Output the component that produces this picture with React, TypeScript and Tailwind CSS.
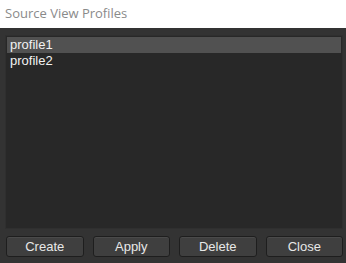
import React from "react";

export default function App() {
  const btn =
    "w-[78px] h-[21px] rounded-[3px] border border-[#1e1e1e] bg-[#3f3f3f] text-[13px] leading-none text-[#e8e8e8] flex items-center justify-center shadow-[inset_0_1px_0_#4a4a4a]";
  return (
    <div className="w-[346px] h-[263px] flex flex-col bg-[#333333] overflow-hidden" style={{ fontFamily: '"Liberation Sans", Arial, sans-serif' }}>
      <div className="h-[29px] bg-white flex items-center px-[5px] text-[13px] text-[#8a8a8a]" style={{ fontFamily: '"Open Sans", "Noto Sans", sans-serif' }}>
        Source View Profiles
      </div>
      <div className="flex-1 flex flex-col pl-[5px] pr-[3px] pt-[7px] pb-[6px]">
        <div className="h-[194px] bg-[#282828] border border-[#2f2f2f] p-[1px] flex flex-col text-[13px] text-[#f2f2f2]">
          <div className="h-[16px] bg-[#515151] pl-[3px] flex items-center">profile1</div>
          <div className="h-[15px] pl-[3px] flex items-center">profile2</div>
        </div>
        <div className="mt-[7px] flex gap-[9px] pl-[1px]">
          <div className={btn}>Create</div>
          <div className={btn}>Apply</div>
          <div className={btn}>Delete</div>
          <div className={btn}>Close</div>
        </div>
      </div>
    </div>
  );
}
